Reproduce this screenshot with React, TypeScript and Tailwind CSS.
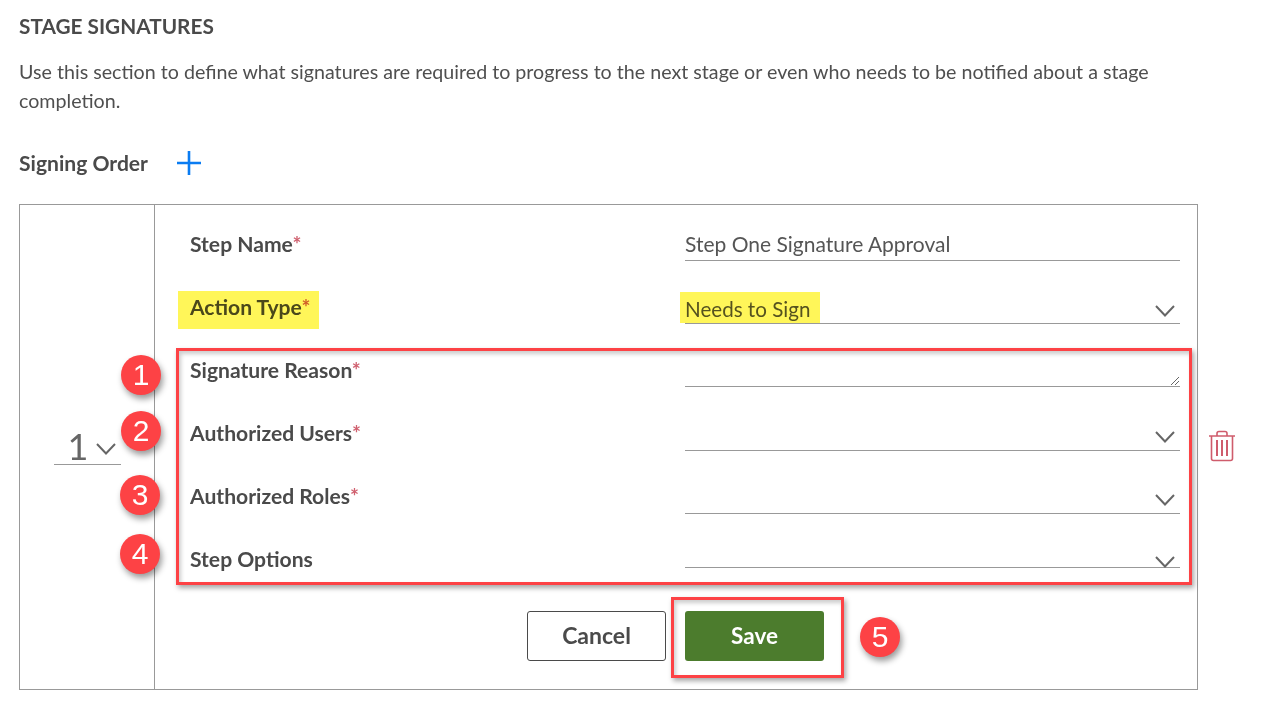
import React from "react";

function Chevron({ className }: { className: string }) {
  return (
    <svg className={className} width="20" height="12" viewBox="0 0 20 12" fill="none" stroke="#666" strokeWidth="2">
      <path d="M1 1l9 9.5L19 1" />
    </svg>
  );
}

function Row({ label, h, required = true, labelClass, children }: { label: string; h: string; required?: boolean; labelClass: string; children?: React.ReactNode }) {
  return (
    <div className={`flex ${h} shrink-0`}>
      <div className="w-[495px] shrink-0 flex items-start">
        <span className={`font-bold text-[21.1px] leading-[24px] text-[#4a4a4a] ${labelClass}`}>
          {label}
          {required && <span className="text-[#d0606f] font-bold">*</span>}
        </span>
      </div>
      <div className="w-[495px] shrink-0 border-b border-[#999] relative h-full">{children}</div>
    </div>
  );
}

function Badge({ n, className }: { n: string; className: string }) {
  return (
    <div className={`absolute w-10 h-10 rounded-full bg-[#fd4245] text-white flex items-center justify-center text-[30px] leading-none shadow-[2px_4px_6px_rgba(0,0,0,0.4)] font-['Liberation_Sans',sans-serif] ${className}`}>
      {n}
    </div>
  );
}

export default function App() {
  return (
    <div className="relative w-[1269px] h-[723px] overflow-hidden bg-white font-['Lato',sans-serif] text-[#4a4a4a]">
      <div className="pl-[19px] pt-[14px]">
        <h2 className="font-bold text-[20.8px] leading-[24px] text-[#4a4a4a]">STAGE SIGNATURES</h2>
        <p className="mt-[19px] text-[19.67px] leading-[29px] text-[#4f4f4f] w-[1150px]">
          Use this section to define what signatures are required to progress to the next stage or even who needs to be notified about a stage completion.
        </p>
        <div className="mt-[33px] flex items-center h-[30px]">
          <span className="font-bold text-[21.1px] text-[#4a4a4a] w-[159px]">Signing Order</span>
          <svg className="-ml-[1px]" width="24" height="24" viewBox="0 0 24 24" stroke="#0a7cf2" strokeWidth="2.6" fill="none">
            <path d="M12 0v24M0 12h24" />
          </svg>
        </div>
        <div className="mt-[26px] flex items-start">
          <div className="flex w-[1179px] h-[486px] border border-[#999] shrink-0">
            <div className="w-[135px] shrink-0 border-r border-[#999] flex items-start justify-center">
              <div className="mt-[222px] w-[67px] h-[38px] border-b border-[#999] flex items-end text-[36px] leading-[38px] text-[#666]">
                <span className="ml-[14px] relative top-[1px]">1</span>
                <Chevron className="ml-[8px] mb-[9px]" />
              </div>
            </div>
            <div className="pl-[35px] pt-[28px] flex flex-col min-w-0">
              <Row label="Step Name" h="h-[28px]" labelClass="-mt-[1px]">
                <span className="absolute left-0 -top-[1px] text-[21px] leading-[24px] text-[#555]">Step One Signature Approval</span>
              </Row>
              <div className="h-[35px] shrink-0" />
              <Row label="Action Type" h="h-[28px]" labelClass="-mt-[1px]">
                <span className="absolute left-0 top-[1px] text-[20.6px] leading-[24px] text-[#555]">Needs to Sign</span>
                <Chevron className="absolute right-[5px] top-[9px]" />
              </Row>
              <div className="h-[35px] shrink-0" />
              <Row label="Signature Reason" h="h-[28px]" labelClass="-mt-[1px]">
                <svg className="absolute right-0 bottom-0" width="10" height="10" viewBox="0 0 10 10" stroke="#666" fill="none">
                  <path d="M1 9l8-8M5 9l4-4" />
                </svg>
              </Row>
              <div className="h-[35px] shrink-0" />
              <Row label="Authorized Users" h="h-[29px]" labelClass="-mt-[1px]">
                <Chevron className="absolute right-[5px] top-[9px]" />
              </Row>
              <div className="h-[34px] shrink-0" />
              <Row label="Authorized Roles" h="h-[29px]" labelClass="-mt-[1px]">
                <Chevron className="absolute right-[5px] top-[9px]" />
              </Row>
              <div className="h-[35px] shrink-0" />
              <Row label="Step Options" h="h-[19px]" required={false} labelClass="-mt-[2px]">
                <Chevron className="absolute right-[5px] top-[7px]" />
              </Row>
              <div className="mt-[43px] flex ml-[337px] gap-[19px]">
                <button className="w-[139px] h-[50px] pb-[2px] rounded-[3px] border border-[#4a4a4a] bg-white font-bold text-[23px] text-[#4a4a4a]">Cancel</button>
                <button className="w-[139px] h-[50px] rounded-[3px] bg-[#4c7c2d] font-bold text-[22.5px] text-white">Save</button>
              </div>
            </div>
          </div>
          <svg className="ml-[10px] mt-[226px] shrink-0" width="28" height="32" viewBox="0 0 28 32" fill="none" stroke="#cf5c6c" strokeWidth="1.6">
            <path d="M1 6h26M9 6V3.5Q9 1.5 11 1.5h6q2 0 2 2V6M3.5 6v22.5q0 2 2 2h17q2 0 2-2V6" />
            <path d="M9 10v16M14 10v16M19 10v16" strokeWidth="2" />
          </svg>
        </div>
      </div>

      {/* annotations */}
      <div className="absolute left-[178px] top-[291px] w-[141px] h-[38px] bg-[#fff200]/65 mix-blend-multiply" />
      <div className="absolute left-[680px] top-[292px] w-[140px] h-[31px] bg-[#fff200]/65 mix-blend-multiply" />
      <div className="absolute left-[176px] top-[348px] w-[1016px] h-[237px] border-[3px] border-[#fd4245] shadow-[2px_3px_5px_rgba(0,0,0,0.35),inset_2px_3px_4px_rgba(0,0,0,0.2)]" />
      <div className="absolute left-[671px] top-[597px] w-[173px] h-[81px] border-[3px] border-[#fd4245] shadow-[2px_3px_5px_rgba(0,0,0,0.35),inset_2px_3px_4px_rgba(0,0,0,0.2)]" />
      <Badge n="1" className="left-[121px] top-[355px]" />
      <Badge n="2" className="left-[121px] top-[411px]" />
      <Badge n="3" className="left-[120px] top-[475px]" />
      <Badge n="4" className="left-[120px] top-[534px]" />
      <Badge n="5" className="left-[860px] top-[617px]" />
    </div>
  );
}
